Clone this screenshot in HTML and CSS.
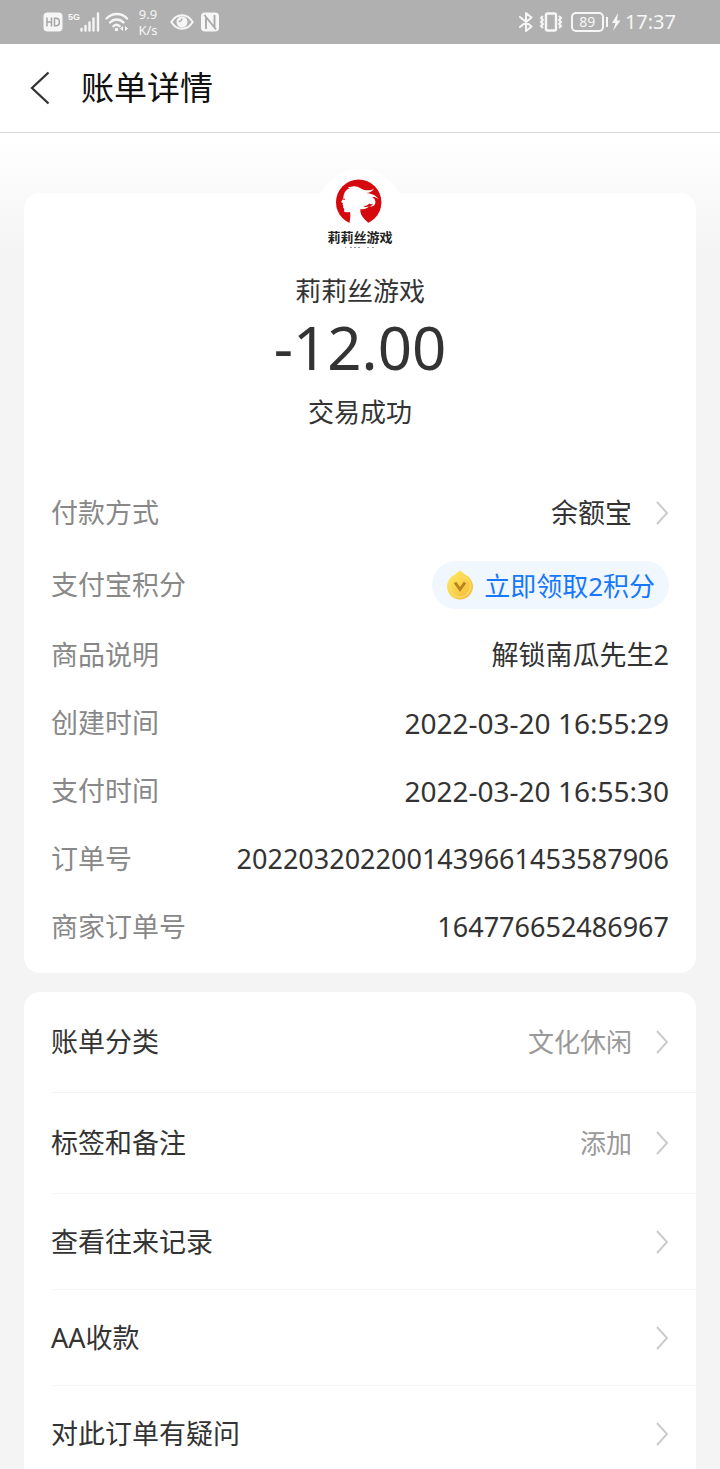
FILE: index.html
```html
<!DOCTYPE html>
<html lang="zh-CN">

<head>
<meta charset="utf-8">
<meta name="viewport" content="width=device-width, initial-scale=1">
<title>账单详情</title>
<link rel="stylesheet" href="styles.css">
</head>

<body>

<div class="screen">

<!-- status bar -->
<div class="statusbar">
<div class="status-left">
<svg class="hd" width="20" height="20" viewBox="0 0 20 20"><rect x="0.5" y="0.5" width="19" height="19" rx="4" fill="#f6f6f6"/><path d="M4 5.500v9M4 10h4.500M8.500 5.500v9M11.500 6.200v7.600h1.500c4.500 0 4.500-7.600 0-7.600z" fill="none" stroke="#a6a6a6" stroke-width="1.500"/></svg>
<span class="net">5G</span>
<svg class="signal" width="20" height="20" viewBox="0 0 20 20"><path d="M1.500 18.500v-1.500M5.500 18.500v-4.500M9.500 18.500v-8M13.500 18.500v-12M18 18.500V1.500" stroke="#f6f6f6" stroke-width="2.400" stroke-linecap="round"/></svg>
<svg class="wifi" width="24" height="20" viewBox="0 0 24 20"><path d="M1.500 6.500c6-6 15-6 20.500 0M5 10.500c4-4 9.500-4 13.500 0M8.500 14.200c2-1.800 4-1.800 6 0" fill="none" stroke="#f6f6f6" stroke-width="2.400" stroke-linecap="round"/><circle cx="11.500" cy="17.500" r="1.800" fill="#f6f6f6"/><path d="M18 14v5l-3-2.500zM20 14v5l3-2.500z" fill="#f6f6f6"/></svg>
<span class="speed">9.9<br>K/s</span>
<svg class="eye" width="24" height="18" viewBox="0 0 24 18"><path d="M1.300 9c5.500-9 16-9 21.400 0-5.400 9-15.900 9-21.400 0z" fill="none" stroke="#f6f6f6" stroke-width="2"/><circle cx="12" cy="9" r="5.500" fill="#f6f6f6"/><path d="M12 5.500c-.3 2-1.300 3-3.200 3.200" fill="none" stroke="#b0b0b0" stroke-width="1.500"/></svg>
<svg class="nfc" width="20" height="20" viewBox="0 0 20 20"><rect x="1" y="0.500" width="18" height="19" rx="4" fill="#f6f6f6"/><path d="M6 17V5l8.500 10.500V3M6 5L4.500 3M14.500 15.500l1.500 2" fill="none" stroke="#a8a8a8" stroke-width="1.800"/></svg>
</div>
<div class="status-right">
<svg class="bluetooth" width="14" height="20" viewBox="0 0 14 20"><path d="M1 5l11.500 9.500L7 19V1l5.500 4.500L1 15" fill="none" stroke="#f6f6f6" stroke-width="2" stroke-linejoin="round" stroke-linecap="round"/></svg>
<svg class="vibrate" width="24" height="20" viewBox="0 0 24 20"><rect x="7" y="1.500" width="10" height="17" rx="1.500" fill="none" stroke="#f6f6f6" stroke-width="2.400"/><path d="M4 4L2 6l2 2-2 2 2 2-2 2 2 2M20 4l2 2-2 2 2 2-2 2 2 2-2 2" fill="none" stroke="#f6f6f6" stroke-width="2"/></svg>
<span class="battery">89</span>
<svg class="bolt" width="10" height="20" viewBox="0 0 10 20"><path d="M7 1L1 11h3.500L2 19l7.500-10.500H6z" fill="#f6f6f6"/></svg>
<span class="clock">17:37</span>
</div>
</div>

<header class="titlebar">
<button class="back" type="button" aria-label="返回"><svg width="20" height="34" viewBox="0 0 20 34"><path d="M18.500 1.500L2 17l16.500 15.500" fill="none" stroke="#333" stroke-width="2.300"/></svg></button>
<h1>账单详情</h1>
</header>

<main>

<section class="card bill">
<div class="logo">
<svg width="88" height="88" viewBox="0 0 88 88">
<circle cx="42.700" cy="33.300" r="22.700" fill="#d5090d"/>
<path d="M33.500 58V53.500c.8-4 1.200-8 .5-10.500-2 .2-5.300.6-6-.8l.2-2.400-1.200-1.300.4-1.500-.9-1.200.5-1.600-2-1.200c1.800-2 2.300-3.800 2.600-6C28.300 22.500 31 20 34.500 19.300c-1 .2-2-.3-2.500-1.300 2 .3 3.500-.8 6-.8 5 0 7 3.300 12 4 3 .3 5.500 0 8-1.500-1.500 2.800-4.500 4-8 4.300 5 .5 9 1.500 12.500 6-2.500-1.800-4.500-2.300-6.500-2 2.700 1.300 3.700 3.500 3.300 6-.4 2.600-2.800 4-5.800 3.300 2-.3 3.300-1.300 3.200-2.800-.8 1-2.500 1-3.400 0-1.500 2-4 2.800-6.300 2.700 2.500 1 4 .8 6 .3-2.500 2.500-5.500 3-8.500 2.500-1 5 2.500 9 7.500 13.500V58z" fill="#fff"/>
<path d="M26.500 30l2.500.4" stroke="#d5090d" stroke-width="1"/>
<text class="logo-text" x="44" y="73" text-anchor="middle">莉莉丝游戏</text>
<path d="M29 78.500h1M34 78.500h2M38 78.500h2M42 78.500h2M51 78.500h2M56 78.500h2" stroke="#999" stroke-width="1"/>
</svg>
</div>
<p class="payee">莉莉丝游戏</p>
<p class="amount">-12.00</p>
<p class="state">交易成功</p>

<dl class="details">
<div class="detail tall">
<dt>付款方式</dt>
<dd><a class="more" href="#">余额宝<svg class="arrow" width="14" height="26" viewBox="0 0 14 26"><path d="M2 2l10 11L2 24"/></svg></a></dd>
</div>
<div class="detail tall">
<dt>支付宝积分</dt>
<dd><button class="points" type="button">
<svg width="28" height="30" viewBox="0 0 28 30"><defs><linearGradient id="gold" x1="0" y1="0" x2="1" y2="1"><stop offset="0" stop-color="#fff05a"/><stop offset="1" stop-color="#f7b53c"/></linearGradient></defs><path d="M14 1c2 0 3 2.500 6 4a13 13 0 1 1-12 0c3-1.500 4-4 6-4z" fill="url(#gold)"/><circle cx="14" cy="16.500" r="10.500" fill="none" stroke="#fbdc66" stroke-width="1.500"/><path d="M9 12.500l5 7 5-7" fill="none" stroke="#b98420" stroke-width="3"/></svg>
立即领取2积分</button></dd>
</div>
<div class="detail">
<dt>商品说明</dt>
<dd>解锁南瓜先生2</dd>
</div>
<div class="detail">
<dt>创建时间</dt>
<dd><time>2022-03-20 16:55:29</time></dd>
</div>
<div class="detail">
<dt>支付时间</dt>
<dd><time>2022-03-20 16:55:30</time></dd>
</div>
<div class="detail">
<dt>订单号</dt>
<dd>2022032022001439661453587906</dd>
</div>
<div class="detail">
<dt>商家订单号</dt>
<dd>164776652486967</dd>
</div>
</dl>
</section>

<nav class="card menu">
<a class="item tall" href="#">账单分类<span class="value">文化休闲</span><svg class="arrow" width="14" height="26" viewBox="0 0 14 26"><path d="M2 2l10 11L2 24"/></svg></a>
<a class="item tall" href="#">标签和备注<span class="value">添加</span><svg class="arrow" width="14" height="26" viewBox="0 0 14 26"><path d="M2 2l10 11L2 24"/></svg></a>
<a class="item" href="#">查看往来记录<svg class="arrow" width="14" height="26" viewBox="0 0 14 26"><path d="M2 2l10 11L2 24"/></svg></a>
<a class="item" href="#">AA收款<svg class="arrow" width="14" height="26" viewBox="0 0 14 26"><path d="M2 2l10 11L2 24"/></svg></a>
<a class="item" href="#">对此订单有疑问<svg class="arrow" width="14" height="26" viewBox="0 0 14 26"><path d="M2 2l10 11L2 24"/></svg></a>
</nav>

</main>

</div>

</body>
</html>
```

FILE: styles.css
```css
* {
	box-sizing: border-box;
}

body {
	margin: 0;
	font-family: "Noto Sans", "Noto Sans CJK SC", sans-serif;
	font-size: 27px;
	line-height: 40px;
	color: #333;
	background-color: #f4f4f4;
}

h1, p, dl, dd {
	margin: 0;
}

svg {
	display: block;
	flex-shrink: 0;
}

a {
	color: inherit;
	text-decoration: none;
}

button {
	padding: 0;
	border: 0;
	background: none;
	font-family: inherit;
	cursor: pointer;
}

.screen {
	height: 100vh;
	overflow: hidden;
}

/* status bar */

.statusbar {
	display: flex;
	justify-content: space-between;
	height: 44px;
	padding: 0 44px 0 43px;
	background-color: #b0b0b0;
	color: #f6f6f6;
}

.status-left,
.status-right {
	display: flex;
	align-items: center;
}

.net {
	width: 12px;
	align-self: flex-start;
	margin: 11px 0 0 5px;
	font-family: "Liberation Sans", sans-serif;
	font-size: 9px;
	font-weight: bold;
	line-height: 12px;
}

.wifi {
	margin-left: 5px;
}

.speed {
	width: 24px;
	margin: 0 10px 0 7px;
	font-size: 13px;
	line-height: 16px;
	text-align: center;
}

.eye {
	margin-right: 6px;
}

.vibrate {
	margin: 0 8px 0 6px;
}

.battery {
	position: relative;
	width: 33px;
	height: 20px;
	border: 2px solid #f6f6f6;
	border-radius: 5px;
	font-size: 14px;
	line-height: 16px;
	text-align: center;
}

.battery::after {
	content: "";
	position: absolute;
	top: 3px;
	right: -6px;
	width: 2px;
	height: 10px;
	background-color: #f6f6f6;
}

.bolt {
	margin: 0 4px 0 7px;
}

.clock {
	font-size: 20px;
}

/* title */

.titlebar {
	display: flex;
	align-items: center;
	height: 89px;
	padding: 0 30px;
	border-bottom: 1px solid #d9d9d9;
	background-color: #fff;
}

.back {
	margin-right: 31px;
}

h1 {
	font-size: 33px;
	font-weight: normal;
	line-height: 48px;
	color: #111;
}

/* content */

main {
	padding: 60px 24px 0;
	background: linear-gradient(#fff, #f4f4f4 120px);
}

.card {
	margin-bottom: 19px;
	border-radius: 16px;
	background-color: #fff;
}

.bill {
	display: flow-root;
	padding-bottom: 12px;
	text-align: center;
}

.logo {
	width: 88px;
	height: 88px;
	margin: -24px auto 14px;
	border-radius: 50%;
	background-color: #fff;
	overflow: hidden;
}

.logo-text {
	font-size: 13px;
	font-weight: bold;
	fill: #222;
}

.payee,
.state {
	font-size: 26px;
}

.amount {
	font-size: 60px;
	line-height: 72px;
}

.state {
	margin: 9px 0 45px;
}

.detail {
	display: flex;
	align-items: center;
	justify-content: space-between;
	height: 68px;
	padding: 0 27px;
}

.detail.tall {
	height: 72px;
}

dt {
	color: #888;
}

time {
	font-size: 28px;
}

.more {
	display: flex;
	align-items: center;
}

.arrow {
	margin-left: 23px;
	fill: none;
	stroke: #ccc;
	stroke-width: 2;
}

.points {
	display: flex;
	align-items: center;
	height: 48px;
	padding: 0 14px;
	border-radius: 24px;
	background-color: #f1f7fe;
	color: #1677ff;
	font-size: 26px;
	gap: 10px;
}

.item {
	display: flex;
	align-items: center;
	justify-content: space-between;
	height: 96px;
	margin-left: 27px;
	padding-right: 27px;
	border-bottom: 1px solid #f5f5f5;
}

.item.tall {
	height: 101px;
}

.value {
	margin-left: auto;
	font-size: 26px;
	color: #999;
}
```
